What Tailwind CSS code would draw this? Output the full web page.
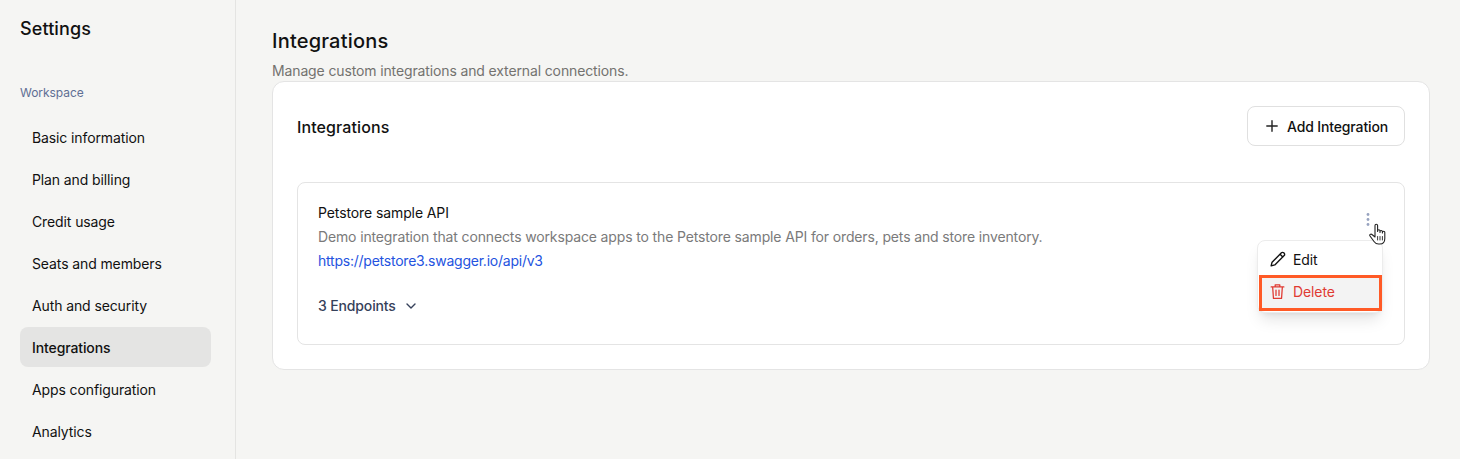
<!DOCTYPE html>
<html lang="en">
<head>
    <meta charset="UTF-8">
    <meta name="viewport" content="width=device-width, initial-scale=1.0">
    <title>Settings - Integrations</title>
    <script src="https://cdn.jsdelivr.net/npm/@tailwindcss/browser@4"></script>
</head>
<body class="h-[459px] overflow-hidden bg-[#f5f5f3] font-['Inter',sans-serif] text-[#111111]">
    <div class="flex h-[459px]">
        <!-- sidebar -->
        <aside class="w-[236px] shrink-0 border-r border-[#e4e4e2] px-5 pt-[17px]">
            <h2 class="text-[18px] leading-[24px] font-medium tracking-[0.1px]">Settings</h2>
            <p class="mt-[44px] text-[12px] leading-[16px] tracking-[-0.05px] text-[#5f6f94]">Workspace</p>
            <nav class="mt-[16px] flex flex-col gap-[2px] text-[14px] leading-[20px] tracking-[-0.11px]">
                <a class="flex h-10 w-[191px] items-center rounded-lg px-3 pt-[2px]">Basic information</a>
                <a class="flex h-10 w-[191px] items-center rounded-lg px-3 pt-[2px]">Plan and billing</a>
                <a class="flex h-10 w-[191px] items-center rounded-lg px-3 pt-[2px]">Credit usage</a>
                <a class="flex h-10 w-[191px] items-center rounded-lg px-3 pt-[2px]">Seats and members</a>
                <a class="flex h-10 w-[191px] items-center rounded-lg px-3 pt-[2px]">Auth and security</a>
                <a class="flex h-10 w-[191px] items-center rounded-lg bg-[#e4e4e3] px-3 pt-[2px] font-medium">Integrations</a>
                <a class="flex h-10 w-[191px] items-center rounded-lg px-3 pt-[2px]">Apps configuration</a>
                <a class="flex h-10 w-[191px] items-center rounded-lg px-3 pt-[2px]">Analytics</a>
            </nav>
        </aside>

        <!-- main -->
        <main class="flex-1 pt-[28px] pr-[30px] pl-9">
            <h1 class="text-[20px] leading-[26px] font-medium tracking-[0.2px]">Integrations</h1>
            <p class="mt-[7px] text-[14px] leading-[20px] tracking-[-0.13px] text-[#73726f]">Manage custom integrations and external connections.</p>

            <section class="mt-0 h-[289px] rounded-xl border border-[#e4e4e4] bg-white px-6 pt-6">
                <div class="flex items-center justify-between">
                    <h3 class="pt-[2px] text-[16px] font-medium tracking-[0.1px]">Integrations</h3>
                    <button class="flex h-10 w-[158px] items-center justify-center gap-[7px] rounded-lg border border-[#e0e0e0] bg-white text-[14px] font-medium tracking-[-0.14px]">
                        <svg class="h-4 w-4" viewBox="0 0 16 16" fill="none" stroke="#222" stroke-width="1.4" stroke-linecap="round"><path d="M8 2.800v10.400M2.800 8h10.400"/></svg>
                        Add Integration
                    </button>
                </div>

                <div class="relative mt-9 h-[163px] rounded-lg border border-[#e4e4e4] bg-white px-5 pt-5">
                    <p class="text-[14px] leading-[20px] tracking-[-0.1px]">Petstore sample API</p>
                    <p class="mt-1 text-[14px] leading-[20px] tracking-[-0.14px] text-[#7a7a7a]">Demo integration that connects workspace apps to the Petstore sample API for orders, pets and store inventory.</p>
                    <a class="mt-1 block text-[14px] leading-[20px] tracking-[-0.23px] text-[#2453e0]">https://petstore3.swagger.io/api/v3</a>
                    <div class="mt-[25px] flex items-center gap-[7px] text-[14px] leading-[20px] font-medium tracking-[-0.14px] text-[#36415a]">
                        3 Endpoints
                        <svg class="h-4 w-4" viewBox="0 0 16 16" fill="none" stroke="#36415a" stroke-width="1.4" stroke-linecap="round" stroke-linejoin="round"><path d="M4 6l4 4 4-4"/></svg>
                    </div>

                    <!-- kebab -->
                    <svg class="absolute top-[30px] right-[34px] h-[13px] w-[4px]" viewBox="0 0 4 13" fill="#98a3c0"><circle cx="2" cy="1.500" r="1.400"/><circle cx="2" cy="6.500" r="1.400"/><circle cx="2" cy="11.500" r="1.400"/></svg>

                    <!-- dropdown -->
                    <div class="absolute top-[57px] right-[21px] flex h-[73px] w-[126px] flex-col rounded-lg border border-[#ececec] bg-white py-[1px] pl-[1px] shadow-lg">
                        <div class="flex h-[33px] items-center gap-[7px] pt-[1px] pl-[11px] text-[14px] tracking-[-0.1px]">
                            <svg class="h-4 w-4" viewBox="1 1 14 14" fill="none" stroke="#111" stroke-width="1.200" stroke-linecap="round" stroke-linejoin="round"><path d="M2 14l.8-3.200L11 2.600a1.400 1.400 0 0 1 2 0l.4.4a1.400 1.400 0 0 1 0 2L5.200 13.200 2 14zM9.800 3.800l2.400 2.400"/></svg>
                            Edit
                        </div>
                        <div class="flex h-9 items-center gap-2 border-[3px] border-[#ff5a26] bg-[#f3f3f3] pb-[3px] pl-2 text-[14px] tracking-[-0.1px] text-[#e03a32]">
                            <svg class="h-[15px] w-[15px]" viewBox="2 1.500 12 13" fill="none" stroke="#e03a32" stroke-width="1.100" stroke-linecap="round" stroke-linejoin="round"><path d="M2.500 4h11M6 4V2.200h4V4M3.800 4l.7 10h7l.7-10M6.700 6.800v4.600M9.300 6.800v4.600"/></svg>
                            Delete
                        </div>
                    </div>

                    <!-- hand cursor -->
                    <svg class="absolute top-[40px] right-[17px] h-[22px] w-[18px]" viewBox="0 0 18 21" fill="#fff" stroke="#222" stroke-width="1.100" stroke-linejoin="round" stroke-linecap="round"><path d="M6 12.500V2a1.300 1.300 0 0 1 2.600 0v6-.5a1.200 1.200 0 0 1 2.400 0V9v-.8a1.200 1.200 0 0 1 2.400 0V9.500v-.6a1.200 1.200 0 0 1 2.400 0V15c0 3.500-2 5.500-5 5.500H9.500c-2 0-3.500-1-4.500-2.500L1 12.500c-.8-1.200.8-2.600 2-1.500l3 2.500z"/><path d="M8.600 13v3.500M11 13v3.500M13.400 13v3.500" fill="none" stroke-width=".9"/></svg>
                </div>
            </section>
        </main>
    </div>
</body>
</html>
